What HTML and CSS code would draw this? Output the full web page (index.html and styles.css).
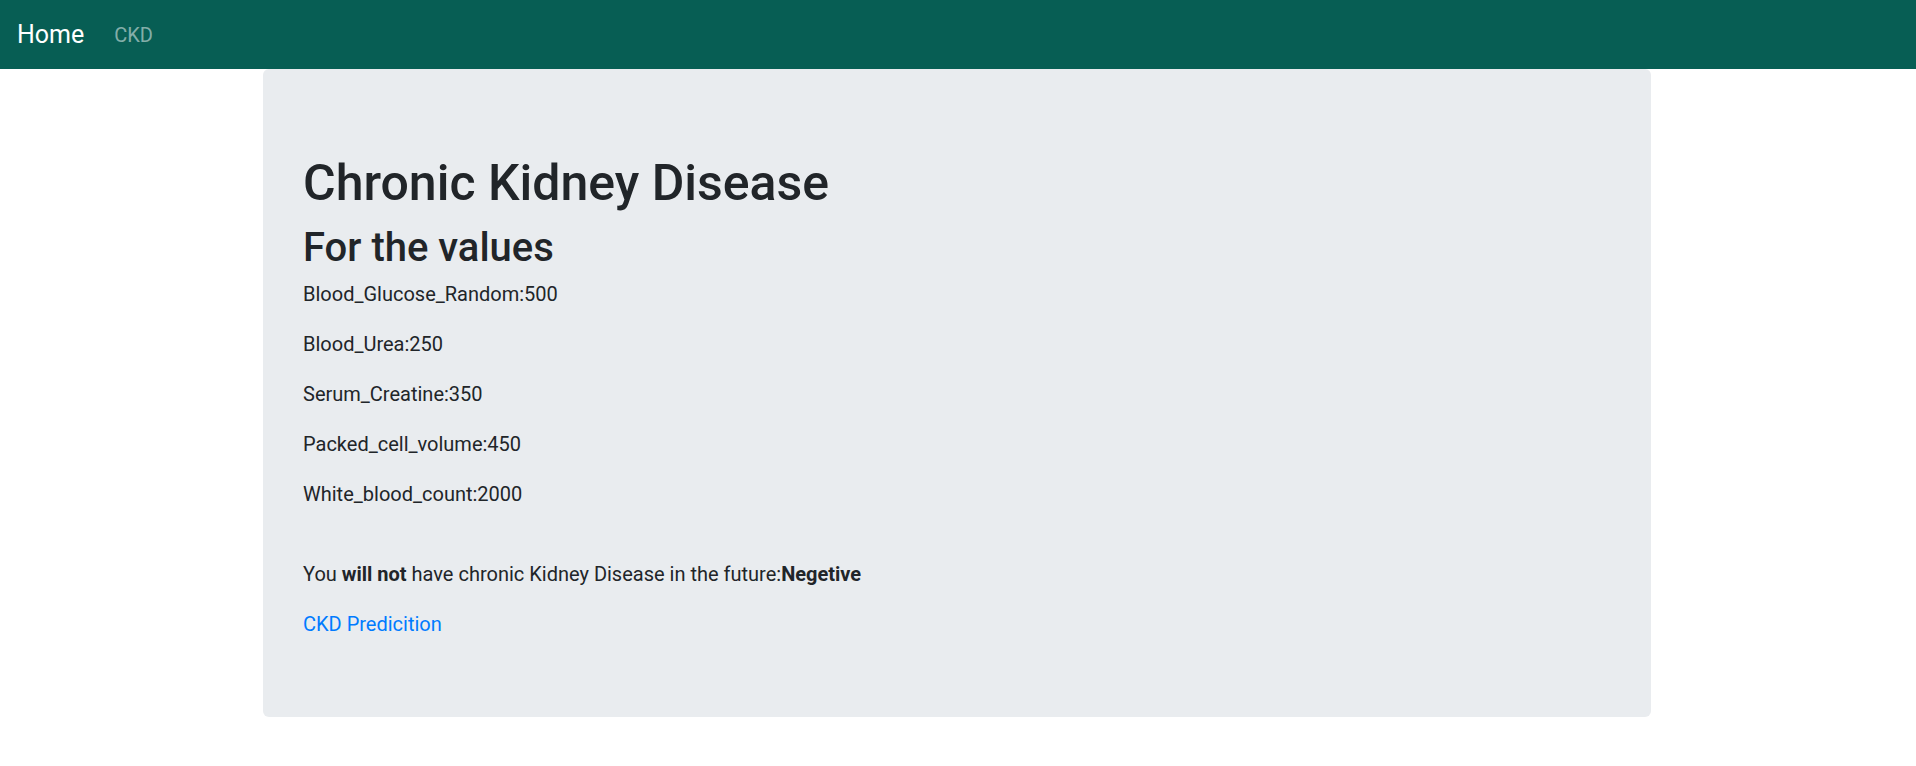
FILE: index.html
```html
<!DOCTYPE html>
<html lang="en">
<head>
<meta charset="utf-8">
<title>CKD</title>
<link rel="stylesheet" href="styles.css">
</head>
<body>
<nav class="navbar">
  <a class="brand" href="#">Home</a>
  <a class="nav-link" href="#">CKD</a>
</nav>
<div class="container">
  <div class="jumbotron">
    <h1 class="title">Chronic Kidney Disease</h1>
    <h2 class="subtitle">For the values</h2>
    <p class="line">Blood_Glucose_Random:500</p>
    <p class="line">Blood_Urea:250</p>
    <p class="line">Serum_Creatine:350</p>
    <p class="line">Packed_cell_volume:450</p>
    <p class="line">White_blood_count:2000</p>
    <br>
    <p class="line">You <b>will not</b> have chronic Kidney Disease in the future:<b>Negetive</b></p>
    <a class="link" href="#">CKD Predicition</a>
  </div>
</div>
</body>
</html>
```
FILE: styles.css
```css
* { box-sizing: border-box; }
html, body { margin: 0; padding: 0; }
body {
  font-family: Roboto, "Noto Sans", sans-serif;
  font-size: 20px;
  line-height: 1.5;
  color: #212529;
  background: #fff;
}
.navbar {
  height: 69px;
  background: #075e54;
  display: flex;
  align-items: center;
  padding: 1px 17px 0;
}
.brand {
  font-size: 25px;
  color: #fff;
  text-decoration: none;
  margin-right: 20px;
  line-height: 1.5;
}
.nav-link {
  font-size: 20px;
  color: rgba(255,255,255,.5);
  text-decoration: none;
  padding: 0 10px;
}
.container {
  width: 1388px;
  margin: 0 auto;
  transform: translateX(-1px);
}
.jumbotron {
  background: #e9ecef;
  border-radius: 6px;
  padding: 82px 40px 78px;
}
.title {
  font-size: 50px;
  font-weight: 500;
  line-height: 1.2;
  margin: 0 0 8px;
  padding-top: 2px;
}
.subtitle {
  font-size: 40px;
  font-weight: 500;
  line-height: 1.2;
  margin: 0 0 7px;
  padding-top: 3px;
}
.line {
  margin: 0 0 20px;
}
b { font-weight: 700; }
.link {
  color: #007bff;
  text-decoration: none;
}
```
